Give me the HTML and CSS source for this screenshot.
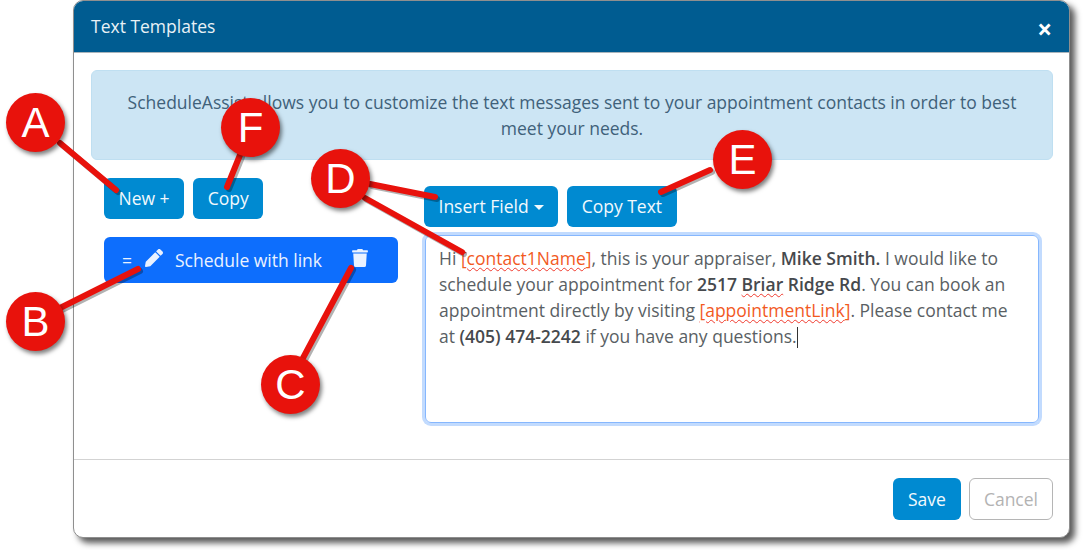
FILE: index.html
```html
<!DOCTYPE html>
<html lang="en">
<head>
    <meta charset="UTF-8">
    <meta name="viewport" content="width=device-width, initial-scale=1.0">
    <title>Text Templates</title>
    <link rel="stylesheet" href="styles.css">
</head>
<body>
    <div class="modal">
        <div class="modal-header">
            <div class="modal-title">Text Templates</div>
            <div class="modal-close">×</div>
        </div>
        <div class="modal-body">
            <div class="alert">ScheduleAssist allows you to customize the text messages sent to your appointment contacts in order to best meet your needs.</div>
            <div class="columns">
                <div class="col-left">
                    <div class="btn-row">
                        <div class="btn">New +</div>
                        <div class="btn">Copy</div>
                    </div>
                    <div class="template-item">
                        <span class="drag">=</span>
                        <svg class="icon-pencil" viewBox="0 0 512 512"><path fill="currentColor" d="M497.9 142.1l-46.1 46.1c-4.7 4.7-12.3 4.7-17 0l-111-111c-4.7-4.7-4.7-12.3 0-17l46.1-46.1c18.7-18.7 49.1-18.7 67.9 0l60.1 60.1c18.8 18.7 18.8 49.1 0 67.9zM284.2 99.8L21.6 362.4.4 483.9c-2.9 16.4 11.4 30.6 27.8 27.8l121.5-21.3 262.6-262.6c4.7-4.7 4.7-12.3 0-17l-111-111c-4.8-4.7-12.4-4.7-17.1 0z"/></svg>
                        <span class="template-name">Schedule with link</span>
                        <svg class="icon-trash" viewBox="0 0 448 512"><path fill="currentColor" d="M432 32H312l-9.4-18.7A24 24 0 0 0 281.1 0H166.8a23.72 23.72 0 0 0-21.4 13.3L136 32H16A16 16 0 0 0 0 48v32a16 16 0 0 0 16 16h416a16 16 0 0 0 16-16V48a16 16 0 0 0-16-16zM53.2 467a48 48 0 0 0 47.9 45h245.8a48 48 0 0 0 47.9-45L416 128H32z"/></svg>
                    </div>
                </div>
                <div class="col-right">
                    <div class="btn-row">
                        <div class="btn">Insert Field<span class="caret"></span></div>
                        <div class="btn">Copy Text</div>
                    </div>
                    <div class="editor">Hi <span class="field misspelt">[contact1Name</span><span class="field">]</span>, this is your appraiser, <b>Mike Smith.</b> I would like to schedule your appointment for <b>2517 <span class="misspelt">Briar</span> Ridge Rd</b>. You can book an appointment directly by visiting <span class="field misspelt">[appointmentLink</span><span class="field">]</span>. Please contact me at <b>(405) 474-2242</b> if you have any questions.<span class="cursor"></span></div>
                </div>
            </div>
        </div>
        <div class="modal-footer">
            <div class="btn btn-save">Save</div>
            <div class="btn-cancel">Cancel</div>
        </div>
    </div>

    <!-- callouts drawn over the screenshot -->
    <svg class="callout-lines" viewBox="0 0 1083 550">
        <g class="line-shadow">
            <path d="M60 143L116 190"/>
            <path d="M240 155L227 187"/>
            <path d="M370 184L435 197"/>
            <path d="M365 198L462 252"/>
            <path d="M710 170L661 192"/>
            <path d="M60 308L138 269"/>
            <path d="M303 358L351 268"/>
        </g>
        <g class="line-red">
            <path d="M60 143L116 190"/>
            <path d="M240 155L227 187"/>
            <path d="M370 184L435 197"/>
            <path d="M365 198L462 252"/>
            <path d="M710 170L661 192"/>
            <path d="M60 308L138 269"/>
            <path d="M303 358L351 268"/>
        </g>
    </svg>
    <div class="callout callout-a">A</div>
    <div class="callout callout-b">B</div>
    <div class="callout callout-c">C</div>
    <div class="callout callout-d">D</div>
    <div class="callout callout-e">E</div>
    <div class="callout callout-f">F</div>
</body>
</html>
```

FILE: styles.css
```css
body {
    background-color: white;
    color: #495057;
    font-family: "Open Sans", sans-serif;
    font-size: 17.5px;
    margin: 0;
    padding: 0;
    width: 1083px;
    height: 550px;
    overflow: hidden;
    position: relative;
}
.modal {
    margin-left: 73px;
    width: 997px;
    height: 538px;
    box-sizing: border-box;
    background-color: white;
    border: 1px solid #8f8f8f;
    border-radius: 10px;
    box-shadow: 5px 5px 6px rgba(0, 0, 0, 0.65);
    overflow: hidden;
    display: flex;
    flex-direction: column;
}
.modal-header {
    background-color: #005c91;
    color: #e8f1f6;
    height: 51px;
    flex: none;
    display: flex;
    justify-content: space-between;
    align-items: center;
    padding: 0 17px;
    border-bottom: 1px solid #a9b4bb;
}
.modal-title {
    margin-top: -1px;
}
.modal-close {
    color: white;
    font-size: 26px;
    font-weight: bold;
    line-height: 26px;
    margin-top: 5px;
}
.modal-body {
    flex: 1;
    padding: 17px 16px 0 17px;
}
.alert {
    background-color: #cce5f4;
    border: 1px solid #bfdff1;
    border-radius: 6px;
    color: #40617a;
    height: 90px;
    box-sizing: border-box;
    padding: 18px 30px;
    line-height: 26px;
    text-align: center;
}
.columns {
    display: flex;
    padding-left: 13px;
}
.col-left {
    width: 294px;
    padding-top: 18px;
}
.col-right {
    margin-left: 26px;
    padding-top: 26px;
    width: 618px;
}
.btn-row {
    display: flex;
    gap: 9px;
}
.btn {
    background-color: #008ad1;
    color: #f2f9fd;
    border-radius: 6px;
    height: 41px;
    line-height: 41px;
    padding: 0 14.5px;
}
.caret {
    display: inline-block;
    margin-left: 5px;
    vertical-align: 3px;
    border-top: 5px solid #f2f9fd;
    border-left: 5px solid transparent;
    border-right: 5px solid transparent;
}
.template-item {
    margin-top: 18px;
    height: 46px;
    background-color: #0d6efd;
    color: #eaf2ff;
    border-radius: 6px;
    display: flex;
    align-items: center;
    padding-left: 18px;
}
.drag {
    width: 23px;
}
.icon-pencil {
    width: 18px;
    height: 18px;
    margin-top: -5px;
}
.template-name {
    margin-left: 12px;
    width: 177px;
}
.icon-trash {
    width: 16px;
    height: 18px;
    margin-top: -5px;
}
.editor {
    margin-top: 8px;
    margin-left: 1px;
    height: 188px;
    width: 614px;
    box-sizing: border-box;
    border: 1px solid #86b7fe;
    box-shadow: 0 0 0 3px #c2dbfe;
    border-radius: 6px;
    padding: 9px 13px;
    line-height: 26px;
    color: #5a5f64;
}
.editor b {
    color: #46494d;
    font-weight: 600;
}
.field {
    color: #f25a1f;
}
.misspelt {
    text-decoration: underline wavy #f03a2e 1px;
    text-underline-offset: 2px;
}
.cursor {
    display: inline-block;
    width: 1px;
    height: 21px;
    background-color: #333;
    vertical-align: -5px;
}
.modal-footer {
    flex: none;
    height: 78px;
    box-sizing: border-box;
    border-top: 1px solid #d3d3d3;
    display: flex;
    justify-content: flex-end;
    gap: 8px;
    padding: 18px 16px 0 0;
}
.btn-save {
    height: 42px;
    line-height: 42px;
    padding: 0 15px;
}
.btn-cancel {
    height: 42px;
    line-height: 40px;
    box-sizing: border-box;
    padding: 0 14px;
    border: 1px solid #b5b5b5;
    border-radius: 6px;
    color: #b3b3b3;
}
.callout-lines {
    position: absolute;
    left: 0;
    top: 0;
    width: 1083px;
    height: 550px;
    fill: none;
    stroke-linecap: round;
}
.line-red {
    stroke: #e8120c;
    stroke-width: 6px;
}
.line-shadow {
    stroke: rgba(0, 0, 0, 0.3);
    stroke-width: 6px;
    transform: translate(2px, 2px);
}
.callout {
    position: absolute;
    width: 59px;
    height: 59px;
    border-radius: 50%;
    background-color: #e8120c;
    box-shadow: 2px 3px 4px rgba(0, 0, 0, 0.5);
    color: white;
    font-family: "Liberation Sans", sans-serif;
    font-size: 42px;
    line-height: 59px;
    text-align: center;
}
.callout-a { left: 6px; top: 93px; }
.callout-b { left: 6px; top: 292px; }
.callout-c { left: 261px; top: 355px; }
.callout-d { left: 311px; top: 149px; }
.callout-e { left: 713px; top: 130px; }
.callout-f { left: 221px; top: 98px; }
```
